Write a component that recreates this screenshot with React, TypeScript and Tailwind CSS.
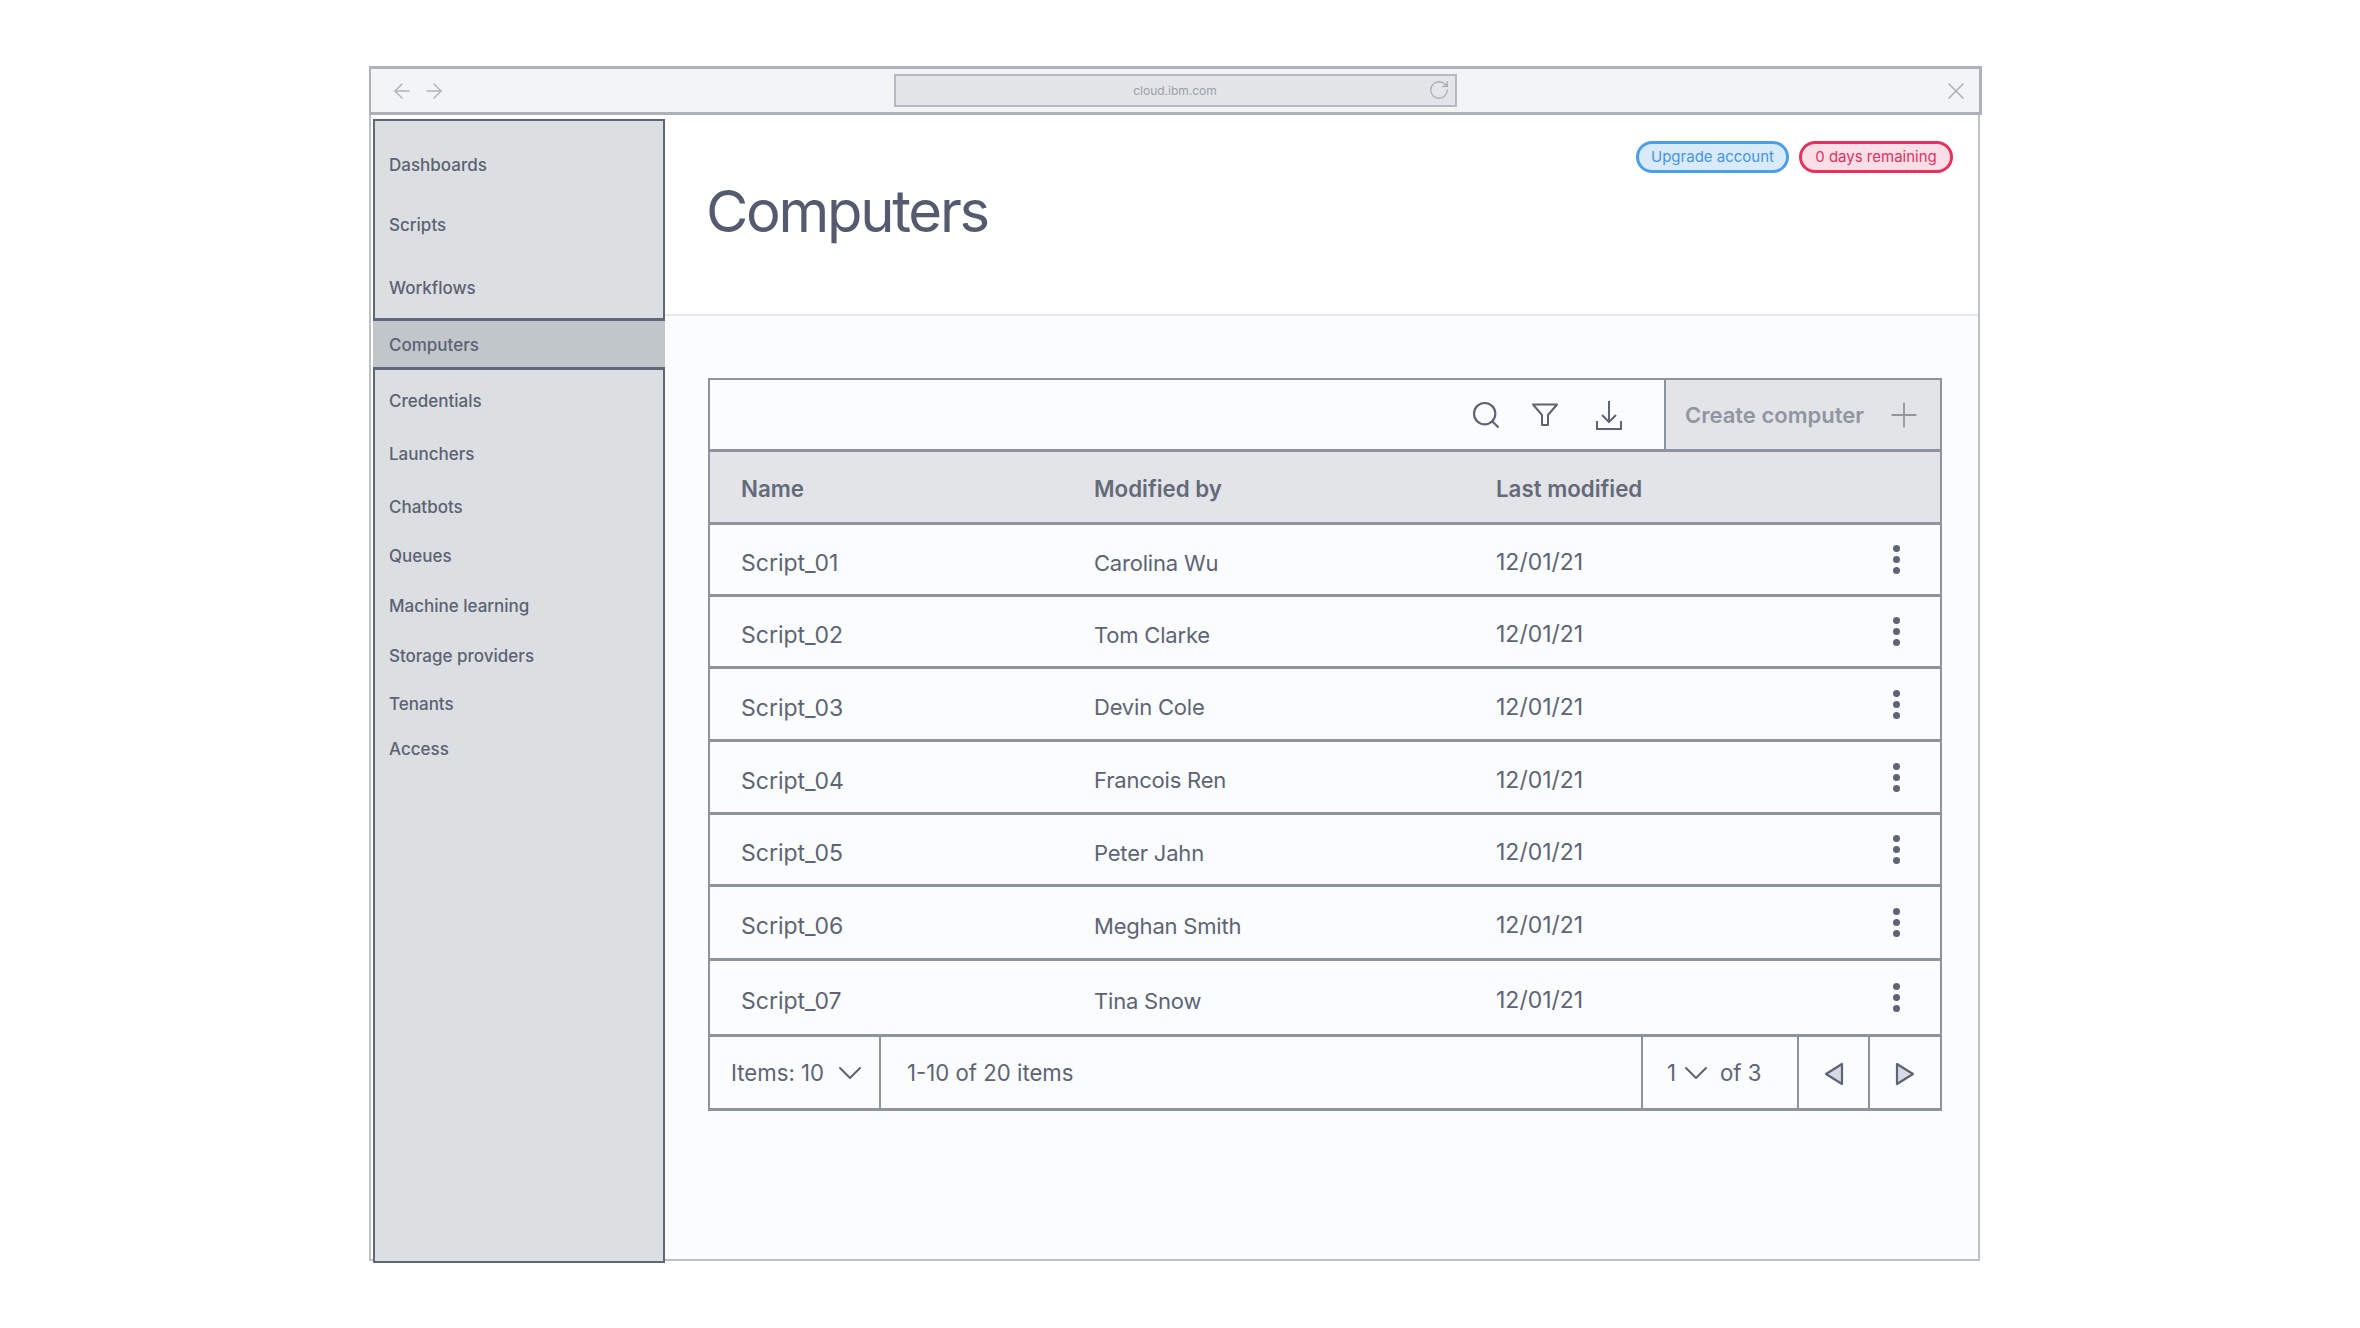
import React from "react";
import { ArrowLeft, ArrowRight, ChevronDown, Plus, RotateCw, Search, X } from "lucide-react";

const navItems = [
    { label: "Dashboards", h: "h-[54px]" },
    { label: "Scripts", h: "h-[66px]" },
    { label: "Workflows", h: "h-[61px]" },
    { label: "Computers", h: "h-[52px]", active: true },
    { label: "Credentials", h: "h-[60px]" },
    { label: "Launchers", h: "h-[46px]" },
    { label: "Chatbots", h: "h-[60px]" },
    { label: "Queues", h: "h-[38px]" },
    { label: "Machine learning", h: "h-[62px]" },
    { label: "Storage providers", h: "h-[38px]" },
    { label: "Tenants", h: "h-[58px]" },
    { label: "Access", h: "h-[32px]" },
];

const rows = [
    { name: "Script_01", by: "Carolina Wu", h: "h-[72px]" },
    { name: "Script_02", by: "Tom Clarke", h: "h-[72px]" },
    { name: "Script_03", by: "Devin Cole", h: "h-[73px]" },
    { name: "Script_04", by: "Francois Ren", h: "h-[73px]" },
    { name: "Script_05", by: "Peter Jahn", h: "h-[72px]" },
    { name: "Script_06", by: "Meghan Smith", h: "h-[74px]" },
    { name: "Script_07", by: "Tina Snow", h: "h-[76px]" },
];

const Kebab = () => (
    <div className="flex flex-col gap-[4px] items-center w-[7px]">
        <span className="w-[7px] h-[7px] rounded-full bg-[#5d6475]"></span>
        <span className="w-[7px] h-[7px] rounded-full bg-[#5d6475]"></span>
        <span className="w-[7px] h-[7px] rounded-full bg-[#5d6475]"></span>
    </div>
);

const Funnel = () => (
    <svg width="28" height="28" viewBox="0 0 28 28" fill="none" stroke="#5d6475" strokeWidth="2">
        <path d="M2 3.5h24l-9 10.5v10h-6V14z" strokeLinejoin="round" />
    </svg>
);

const Tray = () => (
    <svg width="26" height="30" viewBox="0 0 26 30" fill="none" stroke="#5d6475" strokeWidth="2">
        <path d="M13 1v21M6 15l7 7 7-7M1 21v8h24v-8" />
    </svg>
);

const Triangle = ({ flip }: { flip?: boolean }) => (
    <svg width="20" height="24" viewBox="0 0 20 24" className={flip ? "rotate-180" : ""}>
        <path d="M18 2v20L2 12z" fill="#d6dae2" stroke="#5d6475" strokeWidth="2.2" strokeLinejoin="round" />
    </svg>
);

const App = () => {
    return (
        <div className="w-[2360px] h-[1328px] bg-white pt-[66px] pl-[369px] font-['Inter',sans-serif]">
            <div className="w-[1611px] h-[1195px] flex flex-col border-x-2 border-b-2 border-[#bcc0c7]">
                {/* browser bar */}
                <div className="grid grid-cols-[1fr_563px_1fr] items-center h-[49px] bg-[#f3f4f6] border-y-[3px] border-r-[3px] border-[#adb1b9] -mr-[4px] -ml-[2px] border-l-[2px] shrink-0">
                    <div className="flex items-center gap-[8px] pl-[19px] text-[#adb2ba]">
                        <ArrowLeft size={24} strokeWidth={1.4} />
                        <ArrowRight size={24} strokeWidth={1.4} />
                    </div>
                    <div className="relative h-[33px] flex items-center justify-center bg-[#e3e5e8] border-2 border-[#b5b9c0] text-[12px] text-[#9aa0a9]">
                        cloud.ibm.com
                        <RotateCw size={22} strokeWidth={1.4} className="absolute right-[5px] top-[3px] text-[#a6abb3]" />
                    </div>
                    <div className="flex justify-end pr-[9px] text-[#adb2ba]">
                        <X size={28} strokeWidth={1.4} />
                    </div>
                </div>

                <div className="flex flex-1 min-h-0">
                    {/* sidebar */}
                    <aside className="w-[292px] ml-[2px] mt-[4px] -mb-[4px] bg-[#dcdfe2] border-2 border-[#5f6677] pt-[16px] shrink-0">
                        {navItems.map((item) => (
                            <div
                                key={item.label}
                                className={`${item.h} flex items-center pt-[3px] pl-[14px] text-[17px] font-medium text-[#5b6273] ${item.active ? "bg-[#c1c6cb] border-y-[3px] border-[#5f6677] -mx-[2px] pl-[16px]" : ""}`}
                            >
                                {item.label}
                            </div>
                        ))}
                    </aside>

                    <main className="flex-1 min-w-0 flex flex-col">
                        <header className="h-[201px] bg-white border-b-2 border-[#e6e8eb] pt-[26px] pr-[25px] pl-[41px] shrink-0">
                            <div className="flex justify-end gap-[10px]">
                                <div className="w-[153px] h-[32px] rounded-full border-[3px] border-[#4b9fe6] bg-[#d9eafa] text-[#4596e0] text-[15px] flex items-center justify-center">Upgrade account</div>
                                <div className="w-[154px] h-[32px] rounded-full border-[3px] border-[#e8305c] bg-[#fbdfe7] text-[#e42f60] text-[15px] flex items-center justify-center">0 days remaining</div>
                            </div>
                            <h1 className="mt-[3px] text-[58px] leading-[70px] tracking-[-2.3px] text-[#545b6e]">Computers</h1>
                        </header>

                        <div className="flex-1 bg-[#fbfcfd] pl-[43px] pr-[36px] pt-[62px]">
                            {/* toolbar */}
                            <div className="flex h-[74px] border-[2px] border-b-[3px] border-[#8d939f] text-[#5d6475]">
                                <div className="flex-1 flex items-center justify-end pr-[42px]">
                                    <Search size={32} strokeWidth={1.6} className="mr-[29px]" />
                                    <div className="mr-[37px]"><Funnel /></div>
                                    <Tray />
                                </div>
                                <div className="w-[276px] flex items-center bg-[#e2e4e8] border-l-2 border-[#8d939f] pl-[19px] text-[22px] font-semibold text-[#9096a1]">
                                    <span className="pt-[2px]">Create computer</span>
                                    <Plus size={40} strokeWidth={1.1} className="ml-[20px] shrink-0 text-[#9096a1]" />
                                </div>
                            </div>

                            {/* table */}
                            <div className="border-x-2 border-[#8d939f] text-[#5d6475] text-[23px]">
                                <div className="grid grid-cols-[353px_402px_1fr] items-center h-[73px] pt-[3px] pl-[31px] bg-[#e2e4e8] border-b-[3px] border-[#8d939f] text-[22.3px] font-semibold text-[#646a79]">
                                    <span>Name</span>
                                    <span>Modified by</span>
                                    <span>Last modified</span>
                                </div>
                                {rows.map((row) => (
                                    <div key={row.name} className={`${row.h} grid grid-cols-[353px_402px_1fr_auto] items-center pl-[31px] pr-[40px] border-b-[3px] border-[#8d939f]`}>
                                        <span className="pt-[8px]">{row.name}</span>
                                        <span className="pt-[7px] text-[22px] tracking-[-0.2px]">{row.by}</span>
                                        <span className="pt-[6px]">12/01/21</span>
                                        <Kebab />
                                    </div>
                                ))}
                            </div>

                            {/* pagination */}
                            <div className="flex h-[74px] border-x-2 border-b-[3px] border-[#8d939f] text-[22.2px] text-[#5d6475]">
                                <div className="w-[171px] flex items-center pl-[21px] border-r-2 border-[#8d939f]">
                                    Items: 10
                                    <ChevronDown size={40} strokeWidth={1.2} className="ml-[6px] shrink-0" />
                                </div>
                                <div className="flex-1 flex items-center pl-[26px]">1-10 of 20 items</div>
                                <div className="w-[158px] flex items-center pl-[24px] border-x-2 border-[#8d939f]">
                                    1
                                    <ChevronDown size={40} strokeWidth={1.2} className="mr-[4px] shrink-0" />
                                    of 3
                                </div>
                                <div className="w-[71px] flex items-center justify-center pt-[3px] border-r-2 border-[#8d939f]"><Triangle /></div>
                                <div className="w-[70px] flex items-center justify-center pt-[3px]"><Triangle flip /></div>
                            </div>
                        </div>
                    </main>
                </div>
            </div>
        </div>
    );
};

export default App;
